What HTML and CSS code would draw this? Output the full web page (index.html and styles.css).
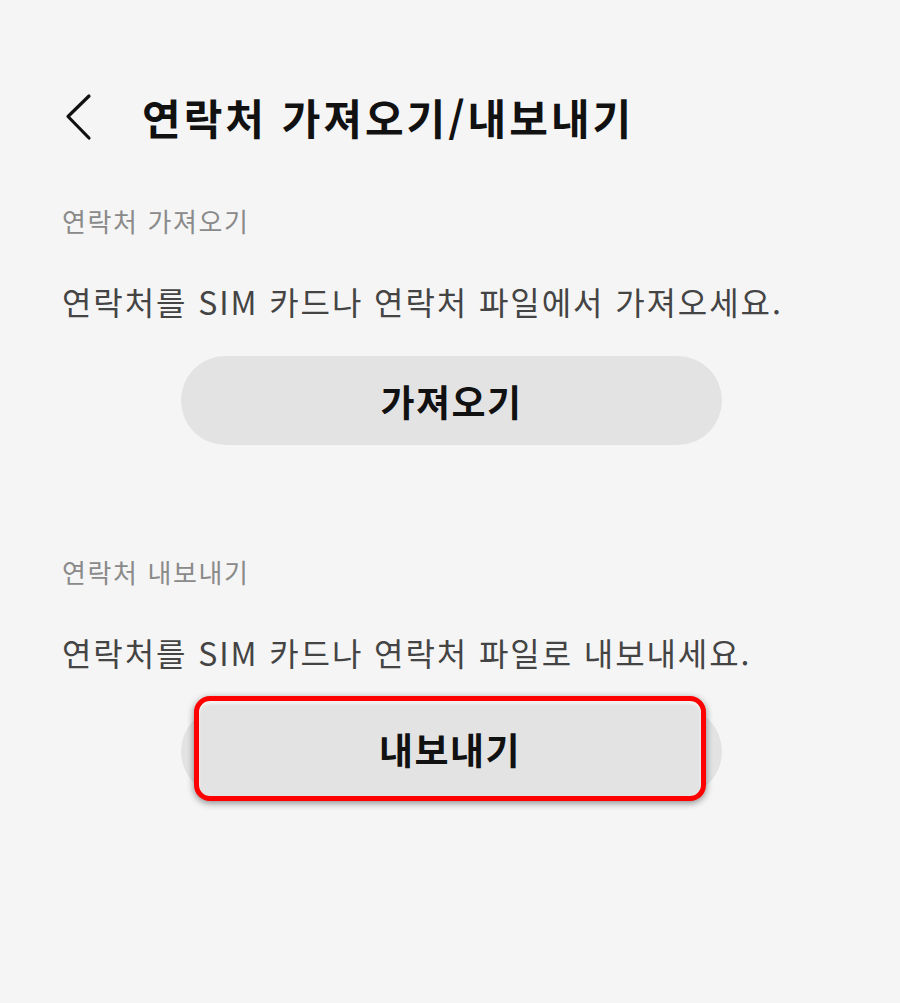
FILE: index.html
```html
<!DOCTYPE html>
<html lang="ko">
<head>
    <meta charset="UTF-8">
    <meta name="viewport" content="width=device-width, initial-scale=1.0">
    <title>연락처 가져오기/내보내기</title>
    <link rel="stylesheet" href="styles.css">
</head>
<body>
    <header class="top-bar">
        <button class="back" aria-label="뒤로">
            <svg width="30" height="48" viewBox="0 0 30 48">
                <path d="M25 3 L4 23.5 L25 45" fill="none" stroke="#111" stroke-width="3.2" stroke-linecap="round" stroke-linejoin="round"/>
            </svg>
        </button>
        <h1>연락처 가져오기/내보내기</h1>
    </header>

    <section class="block">
        <p class="label">연락처 가져오기</p>
        <p class="desc">연락처를 SIM 카드나 연락처 파일에서 가져오세요.</p>
        <div class="btn-row">
            <button class="pill">가져오기</button>
        </div>
    </section>

    <section class="block second">
        <p class="label">연락처 내보내기</p>
        <p class="desc">연락처를 SIM 카드나 연락처 파일로 내보내세요.</p>
        <div class="btn-row">
            <button class="pill" aria-hidden="true"></button>
            <div class="mark">내보내기</div>
        </div>
    </section>
</body>
</html>
```

FILE: styles.css
```css
body {
    margin: 0;
    background: #f5f5f5;
    font-family: "Noto Sans CJK KR", "Noto Sans", sans-serif;
    color: #111;
    height: 1003px;
    overflow: hidden;
}
.top-bar {
    display: flex;
    align-items: center;
    height: 60px;
    padding: 87px 0 0 64px;
}
.back {
    background: none;
    border: none;
    padding: 0;
    width: 30px;
    height: 48px;
    margin-right: 48px;
}
.top-bar h1 {
    margin: 0;
    font-size: 42px;
    font-weight: 700;
    letter-spacing: 3px;
    line-height: 60px;
}
.block {
    padding: 0 62px;
}
.label {
    margin: 56px 0 0;
    font-size: 26px;
    line-height: 36px;
    color: #8a8a8a;
    letter-spacing: 1.6px;
}
.desc {
    margin: 42px 0 0;
    font-size: 32px;
    line-height: 40px;
    color: #444;
    letter-spacing: 1.9px;
}
.btn-row {
    position: relative;
    display: flex;
    justify-content: center;
    margin-top: 35px;
}
.pill {
    width: 541px;
    height: 89px;
    border: none;
    border-radius: 45px;
    background: #e3e3e3;
    font-family: inherit;
    font-size: 37px;
    font-weight: 700;
    color: #111;
    letter-spacing: 1.5px;
    margin-left: 3px;
}
.second .label {
    margin-top: 109px;
}
.mark {
    position: absolute;
    left: 132px;
    top: -11px;
    width: 502px;
    height: 95px;
    border: 5px solid #f00;
    border-radius: 16px;
    background: #e3e3e3;
    box-shadow: 0 2px 7px rgba(0, 0, 0, 0.45), inset 0 3px 3px rgba(255, 255, 255, 0.6);
    display: flex;
    align-items: center;
    justify-content: center;
    font-size: 37px;
    font-weight: 700;
    letter-spacing: 1.5px;
    color: #111;
}
```
